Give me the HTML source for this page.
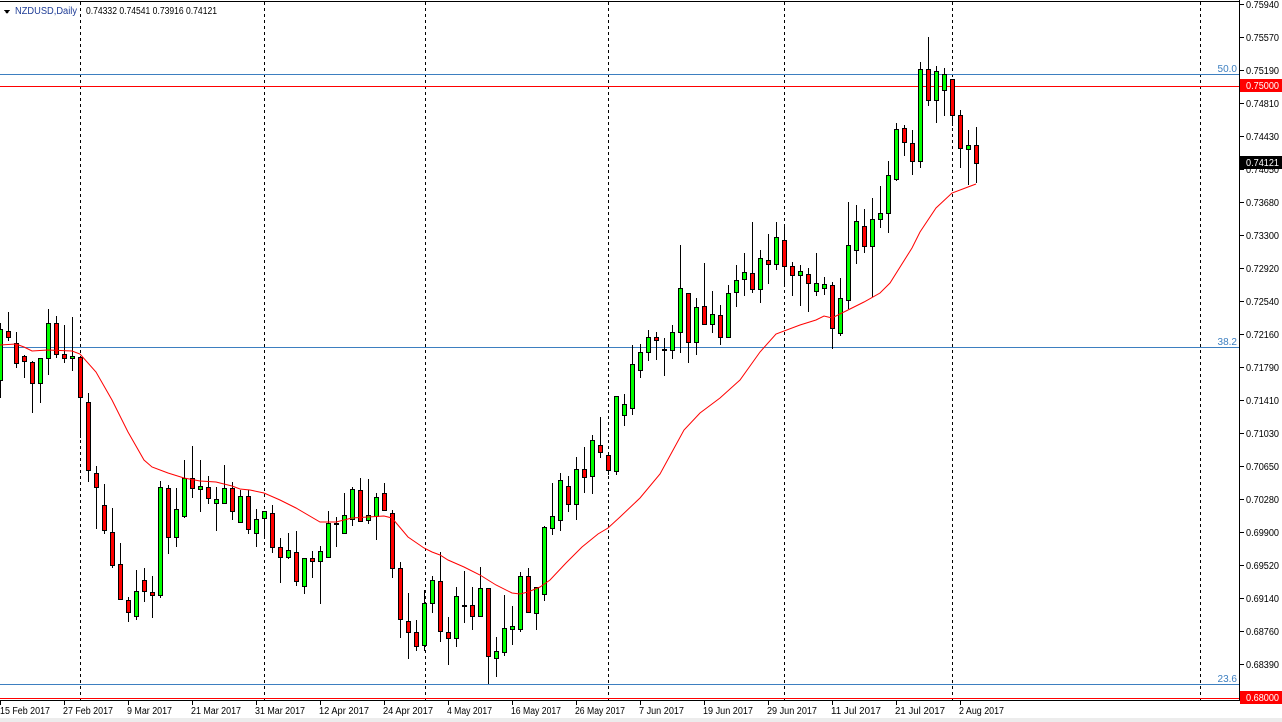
<!DOCTYPE html>
<html><head><meta charset="utf-8"><style>
html,body{margin:0;padding:0;background:#fff;width:1282px;height:722px;overflow:hidden}
svg{display:block}
text{font-family:"Liberation Sans",sans-serif;font-size:10px}
</style></head><body>
<svg id="s" width="1282" height="722" xmlns="http://www.w3.org/2000/svg" shape-rendering="crispEdges">
<rect x="0" y="0" width="1282" height="722" fill="#fff"/>
<rect x="0" y="718" width="1282" height="4" fill="#ececec"/>
<g id="grid"></g>
<line x1="0" y1="74.5" x2="1239" y2="74.5" stroke="#3d7fc0"/>
<line x1="0" y1="347.5" x2="1239" y2="347.5" stroke="#3d7fc0"/>
<line x1="0" y1="684.5" x2="1239" y2="684.5" stroke="#3d7fc0"/>
<line x1="0" y1="86.5" x2="1239" y2="86.5" stroke="#ff0000"/>
<line x1="0" y1="698.5" x2="1239" y2="698.5" stroke="#ff0000"/>
<text x="1237" y="72" fill="#3d7fc0" text-anchor="end">50.0</text>
<text x="1237" y="345" fill="#3d7fc0" text-anchor="end">38.2</text>
<text x="1237" y="682" fill="#3d7fc0" text-anchor="end">23.6</text>
<g id="c"></g>
<polyline id="ma" fill="none" stroke="#ff0000" stroke-width="1" shape-rendering="auto"/>
<line x1="0" y1="1.5" x2="1239" y2="1.5" stroke="#000"/>
<line x1="1239.5" y1="0" x2="1239.5" y2="700" stroke="#000"/>
<line x1="0" y1="700.5" x2="1240" y2="700.5" stroke="#000"/>
<g id="ax"></g>
<path d="M4 10 L10 10 L7 14 Z" fill="#000"/>
<text x="15" y="14" fill="#1e3c96" textLength="62" lengthAdjust="spacingAndGlyphs">NZDUSD,Daily</text>
<text x="86" y="14" fill="#000" textLength="131" lengthAdjust="spacingAndGlyphs">0.74332 0.74541 0.73916 0.74121</text>
</svg>
<script>
var NS="http://www.w3.org/2000/svg";
function el(n,a,p,t){var e=document.createElementNS(NS,n);for(var k in a)e.setAttribute(k,a[k]);if(t)e.textContent=t;p.appendChild(e);return e;}
var grid=document.getElementById('grid');
[80,264,425,608,784,952,1200].forEach(function(x){el('line',{x1:x+.5,y1:2,x2:x+.5,y2:700,stroke:'#000','stroke-dasharray':'3,3'},grid);});
var ax=document.getElementById('ax');
var labs=["0.75940","0.75570","0.75190","0.74810","0.74430","0.74050","0.73680","0.73300","0.72920","0.72540","0.72160","0.71790","0.71410","0.71030","0.70650","0.70280","0.69900","0.69520","0.69140","0.68760","0.68390"];
function t(x,y,fill,s,len){el('text',{x:x,y:y,fill:fill,textLength:len,lengthAdjust:'spacingAndGlyphs'},ax,s);}
labs.forEach(function(l,i){var y=Math.round(4+i*33);el('line',{x1:1240,y1:y+.5,x2:1244,y2:y+.5,stroke:'#000'},ax);t(1246,y+4,'#000',l,33);});
el('rect',{x:1240,y:79,width:42,height:13,fill:'#ff0000'},ax);t(1246,89,'#fff','0.75000',33);
el('rect',{x:1240,y:156,width:42,height:13,fill:'#000'},ax);t(1246,166,'#fff','0.74121',33);
el('rect',{x:1240,y:691,width:42,height:13,fill:'#ff0000'},ax);t(1246,701,'#fff','0.68000',33);
var dates=["15 Feb 2017","27 Feb 2017","9 Mar 2017","21 Mar 2017","31 Mar 2017","12 Apr 2017","24 Apr 2017","4 May 2017","16 May 2017","26 May 2017","7 Jun 2017","19 Jun 2017","29 Jun 2017","11 Jul 2017","21 Jul 2017","2 Aug 2017"];
dates.forEach(function(d,i){var x=i*64;el('line',{x1:x+.5,y1:701,x2:x+.5,y2:705,stroke:'#000'},ax);var w=d.length==11?50:45;t(x+(i?-1:0),714,'#000',d,w);});
var C=[[380,329,323,397],[331,337,312,340],[343,363,332,367],[356,361,355,377],[362,383,361,412],[383,358,358,402],[358,323,309,374],[323,354,316,357],[354,358,325,362],[358,356,317,370],
[357,397,357,437],[402,470,393,481],[473,487,466,528],[505,530,484,533],[532,565,508,567],[564,599,543,599],[600,612,597,621],[616,591,570,619],[580,591,568,601],[592,595,576,617],
[595,487,481,597],[488,537,485,553],[537,509,488,546],[516,478,460,517],[478,488,446,497],[489,486,460,511],[487,498,476,503],[503,499,487,530],[503,488,465,503],[488,511,482,519],
[522,496,490,522],[496,529,490,533],[533,519,509,546],[518,511,511,538],[513,547,505,552],[547,557,538,582],[557,550,533,558],[552,581,531,585],[586,558,558,593],[558,561,551,577],
[561,551,546,603],[557,523,511,557],[524,523,517,546],[533,515,493,533],[519,489,487,525],[490,521,478,521],[520,515,479,523],[516,497,493,539],[493,510,483,510],[513,568,510,577],
[568,619,562,637],[621,632,593,658],[632,646,620,650],[645,603,590,650],[603,580,576,612],[581,631,552,641],[632,638,617,664],[638,596,587,646],[605,606,571,622],[605,616,587,629],
[616,588,567,616],[588,656,588,683],[658,651,637,676],[652,628,595,655],[629,626,606,644],[629,576,572,631],[576,612,568,612],[613,587,587,629],[594,527,526,600],[528,516,483,534],
[520,480,473,530],[486,504,476,511],[504,469,457,519],[469,477,447,492],[476,440,435,493],[445,452,417,457],[455,470,455,474],[471,396,396,474],[415,404,394,425],[408,364,345,414],
[370,352,344,377],[352,337,330,360],[337,340,332,359],[349,350,338,375],[350,332,325,358],[332,288,245,352],[293,342,293,362],[342,307,298,354],[306,324,263,324],[324,314,291,332],
[315,337,305,344],[337,293,285,337],[292,280,265,306],[279,272,253,295],[273,289,222,292],[289,258,250,302],[260,264,234,283],[264,237,222,269],[240,266,225,286],[266,275,262,295],
[275,271,265,305],[274,283,268,311],[291,283,253,295],[288,284,277,294],[285,328,282,348],[333,298,278,335],[300,245,202,308],[250,221,205,263],[226,246,209,252],[246,219,198,296],
[219,213,186,227],[213,175,161,232],[179,129,123,180],[128,142,125,155],[143,161,130,174],[161,69,62,167],[69,100,37,105],[100,71,66,122],[90,74,68,115],[79,115,79,125],
[115,148,110,167],[149,145,130,184],[145,163,127,182]];
var g=document.getElementById('c');
C.forEach(function(c,i){var x=i*8;var o=c[0],cl=c[1],h=c[2],l=c[3];
el('line',{x1:x+.5,y1:h,x2:x+.5,y2:l+1,stroke:'#000'},g);
var tp=Math.min(o,cl),b=Math.max(o,cl);
if(b-tp<2){el('rect',{x:x-2,y:tp,width:5,height:2,fill:'#000'},g);}
else el('rect',{x:x-1.5,y:tp+.5,width:4,height:b-tp,fill:(o>cl?'#00ff00':'#ff0000'),stroke:'#000'},g);});
var ma=[[0,345],[16,344],[24,347],[32,351],[48,350],[72,351],[80,354],[96,372],[112,400],[128,432],[144,460],[152,467],[168,473],[184,478],[200,481],[216,482],[232,486],[240,489],[250,490],[264,493],[280,500],[296,508],[320,522],[336,522],[352,518],[368,517],[384,516],[392,518],[408,537],[424,548],[432,552],[440,555],[448,560],[464,567],[480,575],[496,585],[512,593],[520,594],[528,592],[540,587],[550,580],[566,563],[582,547],[598,534],[608,528],[620,517],[640,498],[660,474],[672,452],[684,430],[700,413],[720,398],[740,380],[760,352],[776,334],[800,325],[816,320],[824,316],[832,318],[848,310],[864,302],[880,293],[890,283],[912,248],[920,232],[936,208],[952,193],[968,187],[976,184]];
document.getElementById('ma').setAttribute('points',ma.map(function(p){return p[0]+','+p[1]}).join(' '));
</script>
</body></html>
